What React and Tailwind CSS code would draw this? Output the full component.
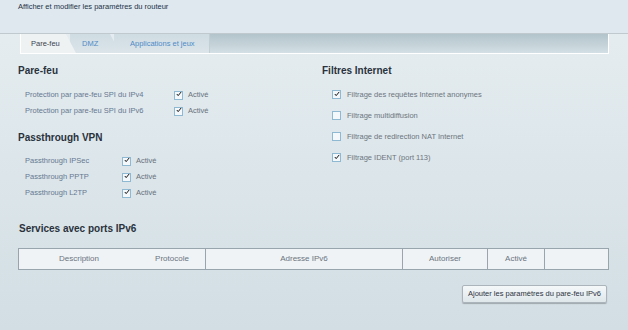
const font = { fontFamily: '"Liberation Sans", Arial, sans-serif' };

const Check = ({ checked }) => (
  <span className="inline-flex w-[9px] h-[9px] border border-[#8fb9d3] bg-[#f4f8fa] items-center justify-center shrink-0">
    {checked && (
      <svg width="11" height="10" viewBox="0 0 11 10" className="-mt-[2px] ml-[1px]">
        <path d="M1.5 5 L4 8 L9.5 1.2" stroke="#111" strokeWidth="1.8" fill="none" />
      </svg>
    )}
  </span>
);

const Row = ({ label, labelW, checked = true }) => (
  <div className="flex items-center h-[16px]">
    <span className="text-[7.5px] text-[#667891]" style={{ width: labelW }}>
      {label}
    </span>
    <Check checked={checked} />
    <span className="ml-[5px] text-[7.5px] text-[#67717c]">Activé</span>
  </div>
);

const Filter = ({ label, checked }) => (
  <div className="flex items-center h-[21px]">
    <Check checked={checked} />
    <span className="ml-[6px] text-[7.5px] text-[#6d757e]">{label}</span>
  </div>
);

const Heading = ({ children }) => (
  <p className="text-[10px] font-bold text-[#2a323c] leading-none">{children}</p>
);

export default function App() {
  return (
    <div className="w-[628px] h-[330px] overflow-hidden bg-gradient-to-b from-[#e7eef1] to-[#d2dee4]" style={font}>
      <div className="h-[34px] bg-[#dfe8ee] border-b border-[#bfc9ce] pl-[18px] pt-[2px]">
        <p className="text-[7.5px] text-[#23334a] leading-[10px]">Afficher et modifier les paramètres du routeur</p>
      </div>

      {/* Tabs */}
      <div className="flex h-[20px] ml-[20px] w-[589px] border-b border-white">
        <div className="relative z-10 w-[56px] h-full bg-[#eef2f3] border-l border-white [clip-path:polygon(0_0,82%_0,100%_100%,0_100%)] flex items-center pl-[10px] text-[7.5px] text-[#3c4450]">
          Pare-feu
        </div>
        <div className="relative z-[5] -ml-[6px] w-[50px] h-full bg-gradient-to-b from-[#cfdce2] to-[#dbe5ea] [clip-path:polygon(0_0,80%_0,100%_100%,0_100%)] flex items-center pl-[12px] text-[7.5px] text-[#4f8bc6]">
          DMZ
        </div>
        <div className="-ml-[6px] w-[96px] h-full bg-gradient-to-b from-[#cfdce2] to-[#dbe5ea] border-r border-[#c2cfd5] flex items-center pl-[16px] text-[7.5px] text-[#4f8bc6]">
          Applications et jeux
        </div>
        <div className="flex-1 h-full bg-gradient-to-b from-[#b3c4cb] to-[#d3dfe4] border-r border-white" />
      </div>

      <div className="flex">
        <div className="w-[304px] pl-[18px] pt-[12px]">
          <Heading>Pare-feu</Heading>
          <div className="pl-[7px] mt-[11px]">
            <Row label="Protection par pare-feu SPI du IPv4" labelW={149} />
            <Row label="Protection par pare-feu SPI du IPv6" labelW={149} />
          </div>
          <div className="mt-[14px]">
            <Heading>Passthrough VPN</Heading>
          </div>
          <div className="pl-[7px] mt-[10px]">
            <Row label="Passthrough IPSec" labelW={97} />
            <Row label="Passthrough PPTP" labelW={97} />
            <Row label="Passthrough L2TP" labelW={97} />
          </div>
        </div>
        <div className="pl-[18px] pt-[12px]">
          <Heading>Filtres Internet</Heading>
          <div className="pl-[10px] mt-[8px]">
            <Filter label="Filtrage des requêtes Internet anonymes" checked />
            <Filter label="Filtrage multidiffusion" />
            <Filter label="Filtrage de redirection NAT Internet" />
            <Filter label="Filtrage IDENT (port 113)" checked />
          </div>
        </div>
      </div>

      <div className="pl-[19px] mt-[23px]">
        <Heading>Services avec ports IPv6</Heading>
      </div>

      <div className="ml-[18px] mt-[14px] w-[591px] h-[22px] border border-[#98a5ad] bg-[#eff3f6] flex text-[8px] text-[#6b7480]">
        <div className="w-[186px] flex items-center">
          <span className="w-[120px] text-center">Description</span>
          <span className="flex-1 text-center">Protocole</span>
        </div>
        <div className="w-[197px] border-l border-[#98a5ad] flex items-center justify-center">Adresse IPv6</div>
        <div className="w-[85px] border-l border-[#98a5ad] flex items-center justify-center">Autoriser</div>
        <div className="w-[57px] border-l border-[#98a5ad] flex items-center justify-center">Activé</div>
        <div className="flex-1 border-l border-[#98a5ad]" />
      </div>

      <div className="flex justify-end pr-[21px] mt-[15px]">
        <button className="h-[18px] px-[5px] border border-[#aab4ba] rounded-[2px] bg-gradient-to-b from-[#f5f8f9] to-[#dfe7eb] shadow-[0_1px_1px_rgba(0,0,0,0.25)] text-[7.5px] text-[#2b3442]">
          Ajouter les paramètres du pare-feu IPv6
        </button>
      </div>
    </div>
  );
}
